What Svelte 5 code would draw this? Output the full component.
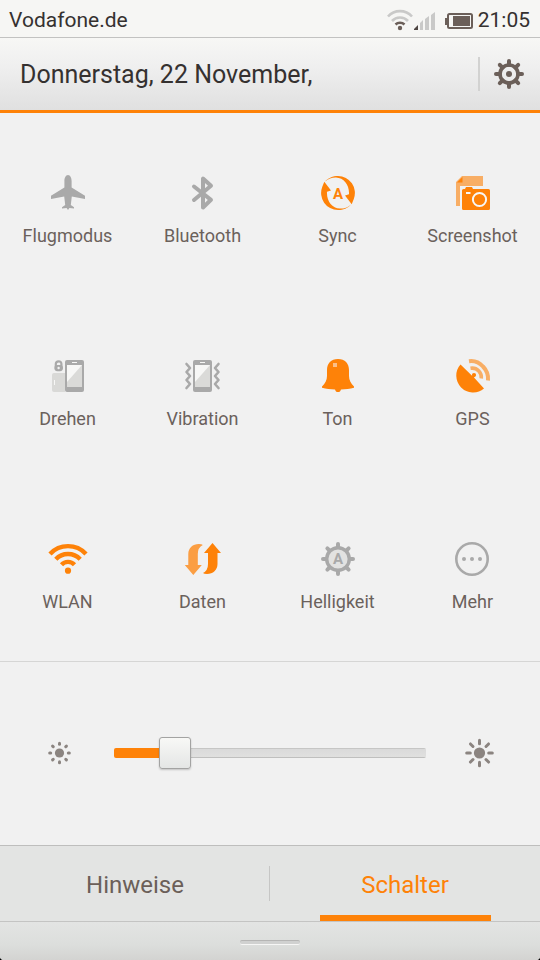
<script>
  let brightness = $state(16);
  let activeTab = $state('Schalter');

  const tabs = ['Hinweise', 'Schalter'];
  const rays = [0, 45, 90, 135, 180, 225, 270, 315];

  let toggles = $state([
    { id: 'airplane', label: 'Flugmodus', on: false },
    { id: 'bluetooth', label: 'Bluetooth', on: false },
    { id: 'sync', label: 'Sync', on: true },
    { id: 'screenshot', label: 'Screenshot', on: true },
    { id: 'rotate', label: 'Drehen', on: false },
    { id: 'vibrate', label: 'Vibration', on: false },
    { id: 'sound', label: 'Ton', on: true },
    { id: 'gps', label: 'GPS', on: true },
    { id: 'wlan', label: 'WLAN', on: true },
    { id: 'data', label: 'Daten', on: true },
    { id: 'brightness', label: 'Helligkeit', on: false },
    { id: 'more', label: 'Mehr', on: false },
  ]);
</script>

{#snippet phone()}
  <rect width="19" height="32" rx="2" />
  <path fill="#f7f7f6" d="M2 5h15v22H2z" />
  <path fill="#dadad8" d="M17 5v22H2v-5z" />
  <path fill="#f7f7f6" d="M7 2h5v1H7z" />
{/snippet}

{#snippet icon(id)}
  {#if id === 'airplane'}
    <path d="M21 2c2.200 0 3.600 3 3.600 6v6.500L38 22.700v3.300l-13.200-2.500-1 8.500 3.200 2.300v1.200l-4.600-.4L21 37l-1.400-1.900-4.600.4v-1.200l3.200-2.300-1-8.500L4 26v-3.300l13.400-8.200V8c0-3 1.400-6 3.600-6z" />
  {:else if id === 'bluetooth'}
    <path class="line" stroke-width="4" d="M12 27 29 12.800l-8-7.300v29l8-7.700L12 13.500" />
  {:else if id === 'sync'}
    {#each [0, 180] as turn}
      <path transform="rotate({turn} 21 20)" d="M7.300 8.700 14 17.500l-4 1.300C9.500 28 15 35.300 23 35.600c4 .1 7.500-1 11-4.200C31 35 26 37 21 37A17 17 0 0 1 5.200 14z" />
    {/each}
    <text x="21" y="26" text-anchor="middle">A</text>
  {:else if id === 'screenshot'}
    <path class="soft" d="M10 3h21v10H8v20H4V9z" />
    <path d="M5 9.500 10.500 4v5.500z" />
    <path stroke="#f1f1f1" stroke-width="1.500" paint-order="stroke" d="M11.500 16H13l1-2h6l1 2h15.500q1.500 0 1.500 1.500v18q0 1.500-1.500 1.500h-25q-1.500 0-1.500-1.500v-18q0-1.500 1.500-1.500z" />
    <path fill="#f7f7f6" d="M14 19h4.500v2H14z" />
    <circle cx="27.500" cy="26.500" r="6.600" fill="none" stroke="#f7f7f6" stroke-width="2" />
  {:else if id === 'rotate'}
    <path fill="#d9d9d7" d="M7 17h11v19H7q-2 0-2-2V19q0-2 2-2z" />
    <path fill="#f7f7f6" d="M7 24h1v5H7z" />
    <path class="line" stroke-width="2.200" d="M8.800 10.500V8q0-2.700 2.800-2.700T14.400 8v2.500" />
    <path d="M7.300 12q0-3 3-3h2.700q3 0 3 3t-3 3.200h-2.700q-3-.2-3-3.200z" />
    <circle cx="11.600" cy="12" r="1.200" fill="#f1f1f1" />
    <g transform="translate(18 4)">{@render phone()}</g>
  {:else if id === 'vibrate'}
    <path class="line" stroke-width="2.600" d="m4.500 8 3.500 4-3.500 4L8 20l-3.500 4L8 28l-3.500 4M36.500 8 33 12l3.500 4-3.500 4 3.500 4-3.500 4 3.500 4" />
    <g transform="translate(11 4)">{@render phone()}</g>
  {:else if id === 'sound'}
    <path d="M21 3c7 0 11 4.500 11 11v6c0 4 2 7.500 5 10.500v1.200c-4 1.200-8.500 1.600-13 1.700-.4 1.700-1.400 2.600-3 2.600s-2.600-.9-3-2.600c-4.500-.1-9-.5-13-1.700v-1.200c3-3 5-6.500 5-10.500v-6C10 7.500 14 3 21 3z" />
    <path fill="#fbbf88" d="M16 7h4v4h-4z" />
  {:else if id === 'gps'}
    <path d="M8.500 8.500 20.300 20l1.700-1.500L23 20l-1 1.600 10 10.800A16.800 16.800 0 0 1 8.500 8.500z" />
    <circle cx="22" cy="19" r="2.100" />
    <path class="soft-line" stroke-width="4" d="M17 5.200Q25 4 31 10.500q5.800 6 5 14" />
    <path class="soft-line" stroke-width="3.600" d="M18.500 12.300q5-.8 8.300 2.700 3 3.200 2.500 7.500" />
  {:else if id === 'wlan'}
    <g class="arc" stroke-width="4.400">
      <path d="M3 14.900a24.700 24.700 0 0 1 36 0M8.800 20.300a16.700 16.700 0 0 1 24.400 0M14.500 25.700a8.900 8.900 0 0 1 13 0" />
    </g>
    <circle cx="21" cy="31.700" r="3.100" />
  {:else if id === 'data'}
    <path d="M30.500 4 39 14h-3.500v11c0 6-4.500 10-10.500 10q-3 0-4-1 5-2.500 5-9V14h-4z" />
    <path class="mid" transform="rotate(180 20.900 20)" d="M30.500 4 39 14h-3.500v11c0 6-4.500 10-10.500 10q-3 0-4-1 5-2.500 5-9V14h-4z" />
  {:else if id === 'brightness'}
    {#each rays as turn}
      <path class="line" stroke-width="4" transform="rotate({turn} 21 20)" d="M21 5v4" />
    {/each}
    <circle cx="21" cy="20" r="11.300" fill="#e2e2e1" stroke="currentColor" stroke-width="3.400" />
    <text x="21" y="25" text-anchor="middle">A</text>
  {:else}
    <circle cx="20" cy="20" r="15.700" fill="none" stroke="currentColor" stroke-width="2.600" />
    <circle cx="12" cy="20" r="2" />
    <circle cx="20" cy="20" r="2" />
    <circle cx="28" cy="20" r="2" />
  {/if}
{/snippet}

<div class="screen">
  <div class="status">
    <span class="carrier">Vodafone.de</span>
    <svg width="86" height="24" viewBox="0 0 86 24" aria-hidden="true">
      <g fill="none" stroke="#c9c9c8" stroke-width="2.600">
        <path d="M1 8.500a16 16 0 0 1 24 0" />
        <path d="M5 13a11 11 0 0 1 16 0" />
        <path stroke="#6b5f59" d="M8.500 16.500a6.500 6.500 0 0 1 9 0" />
      </g>
      <circle cx="13" cy="20" r="2.200" fill="#6b5f59" />
      <path fill="#4e4642" d="M27 22v-1l4-4v5z" />
      <path fill="#c9c9c8" d="M33 22v-7l3-3v10zM38 22V11l4-3v14zM44 22V7l4-3v18z" />
      <rect x="61" y="6" width="24" height="14" rx="1.500" fill="none" stroke="#6b5f59" stroke-width="2" />
      <path fill="#6b5f59" d="M58 10h3v7h-3zM66 8h17v10H66z" />
    </svg>
    <time>21:05</time>
  </div>

  <header>
    <h1>Donnerstag, 22 November,</h1>
    <button class="settings" aria-label="Einstellungen">
      <svg width="32" height="32" viewBox="0 0 32 32" aria-hidden="true">
        {#each rays as turn}
          <path stroke="currentColor" stroke-width="4" stroke-linecap="round" transform="rotate({turn} 16 16)" d="M16 3v4" />
        {/each}
        <circle cx="16" cy="16" r="9" fill="none" stroke="currentColor" stroke-width="3.600" />
        <circle cx="16" cy="16" r="3" fill="currentColor" />
      </svg>
    </button>
  </header>

  <main>
    <div class="toggles">
      {#each toggles as toggle (toggle.id)}
        <button class="toggle" class:on={toggle.on} aria-pressed={toggle.on} onclick={() => (toggle.on = !toggle.on)}>
          <svg width="41" height="41" viewBox="0 0 41 41" aria-hidden="true">
            {@render icon(toggle.id)}
          </svg>
          <span>{toggle.label}</span>
        </button>
      {/each}
    </div>

    <div class="slider">
      <svg width="32" height="32" viewBox="0 0 32 32" aria-hidden="true">
        <circle cx="15.500" cy="16" r="4.600" />
        {#each rays as turn}
          <path stroke-width="3" transform="rotate({turn} 15.500 16)" d="M15.500 6.200v1" />
        {/each}
      </svg>
      <input
        type="range"
        min="0"
        max="100"
        aria-label="Bildschirmhelligkeit"
        bind:value={brightness}
        style="--fill: {brightness}%"
      />
      <svg width="32" height="32" viewBox="0 0 32 32" aria-hidden="true">
        <circle cx="15.500" cy="16" r="5.600" />
        {#each rays as turn}
          <path stroke-width="3" transform="rotate({turn} 15.500 16)" d="M15.500 3.200v3.600" />
        {/each}
      </svg>
    </div>
  </main>

  <nav>
    {#each tabs as tab}
      <button class="tab" class:active={tab === activeTab} onclick={() => (activeTab = tab)}>
        <span>{tab}</span>
      </button>
    {/each}
  </nav>
  <div class="grip"><i></i></div>
</div>

<style>
  :global(body) {
    margin: 0;
    background: #000;
  }

  .screen {
    display: flex;
    flex-direction: column;
    min-height: 100vh;
    background: #f1f1f1;
    color: #353130;
    font-family: Roboto, "Noto Sans", sans-serif;
    border-radius: 0 0 4px 4px;
    overflow: hidden;
  }

  button {
    margin: 0;
    padding: 0;
    border: none;
    background: none;
    font: inherit;
    color: inherit;
    cursor: pointer;
  }

  svg {
    display: block;
    flex: none;
  }

  .status {
    display: flex;
    align-items: center;
    height: 37px;
    padding: 2px 10px 0 9px;
    box-sizing: border-box;
    background: #f6f6f4;
    font-size: 21px;
  }

  .carrier {
    flex: 1;
  }

  .status time {
    margin-left: 5px;
  }

  header {
    display: flex;
    align-items: center;
    height: 72px;
    border-top: 1px solid #c2c2c1;
    border-bottom: 3px solid #fe8208;
    background: linear-gradient(#f7f7f5, #efefef 40%, #e0e0e0);
  }

  h1 {
    flex: 1;
    margin: 0;
    padding: 0 0 0 20px;
    font-size: 25px;
    font-weight: 400;
  }

  .settings {
    padding: 1px 15px 1px 13px;
    border-left: 2px solid #d2d2d1;
    color: #6b5f59;
  }

  main {
    flex: 1;
    display: flex;
    flex-direction: column;
  }

  .toggles {
    display: grid;
    grid-template-columns: repeat(4, 1fr);
    box-shadow: inset 0 -1px #d6d6d5;
  }

  .toggle {
    display: flex;
    flex-direction: column;
    align-items: center;
    justify-content: flex-start;
    gap: 10px;
    padding: 60px 0 48px;
    color: #a9a9a9;
    font-size: 18px;
    line-height: 24px;
  }

  .toggle.on {
    color: #fe8208;
  }

  .toggle span {
    color: #6b615c;
  }

  .toggle svg {
    fill: currentColor;
  }

  .toggle text {
    font-size: 15px;
    font-weight: 700;
  }

  .line,
  .soft-line,
  .arc {
    fill: none;
    stroke: currentColor;
  }

  .line {
    stroke-linecap: round;
    stroke-linejoin: round;
  }

  .soft,
  .soft-line {
    opacity: 0.6;
  }

  .mid {
    opacity: 0.75;
  }

  .slider {
    flex: 1;
    display: flex;
    align-items: center;
    gap: 38px;
    padding: 0 44px 2px;
  }

  .slider svg {
    fill: #8b8480;
    stroke: #8b8480;
    stroke-linecap: round;
    stroke-width: 0;
  }

  input[type="range"] {
    flex: 1;
    min-width: 0;
    height: 36px;
    margin: 0;
    background: none;
    appearance: none;
    -webkit-appearance: none;
  }

  input[type="range"]::-webkit-slider-runnable-track {
    height: 10px;
    border-radius: 2px;
    background:
      linear-gradient(#fe8208, #fe8208) 0 0 / var(--fill) 100% no-repeat,
      linear-gradient(#c6c6c5 1px, #dadada 1px, #e0e0df 9px, #bfbfbe 9px);
  }

  input[type="range"]::-webkit-slider-thumb {
    -webkit-appearance: none;
    width: 32px;
    height: 32px;
    margin-top: -11px;
    box-sizing: border-box;
    border: 1px solid #a3a3a2;
    border-radius: 3px;
    background: linear-gradient(#f8f8f6, #e4e6e5);
    box-shadow: 0 1px 2px rgba(0, 0, 0, 0.2);
  }

  nav {
    display: grid;
    grid-template-columns: 1fr 1fr;
    border-top: 1px solid #bebebd;
    background: #e3e4e3;
  }

  .tab {
    display: flex;
    justify-content: center;
    font-size: 24px;
    color: #6b5f59;
    background: linear-gradient(#c6c6c5, #c6c6c5) right 20px / 1px 35px no-repeat;
  }

  .tab:last-child {
    background: none;
  }

  .tab span {
    width: 171px;
    padding-top: 9px;
    border-bottom: 6px solid transparent;
    line-height: 60px;
  }

  .tab.active {
    color: #fe8208;
  }

  .tab.active span {
    border-color: #fe8208;
  }

  .grip {
    display: flex;
    justify-content: center;
    height: 38px;
    border-top: 1px solid #c4c4c3;
    background: linear-gradient(#e3e4e3, #dcdedc 60%, #d3d3d1);
  }

  .grip i {
    width: 60px;
    height: 3px;
    margin-top: 18px;
    border-top: 1px solid #b5b5b4;
    border-bottom: 1px solid #f6f6f5;
    border-radius: 2px;
    background: #d0d1d0;
  }
</style>
